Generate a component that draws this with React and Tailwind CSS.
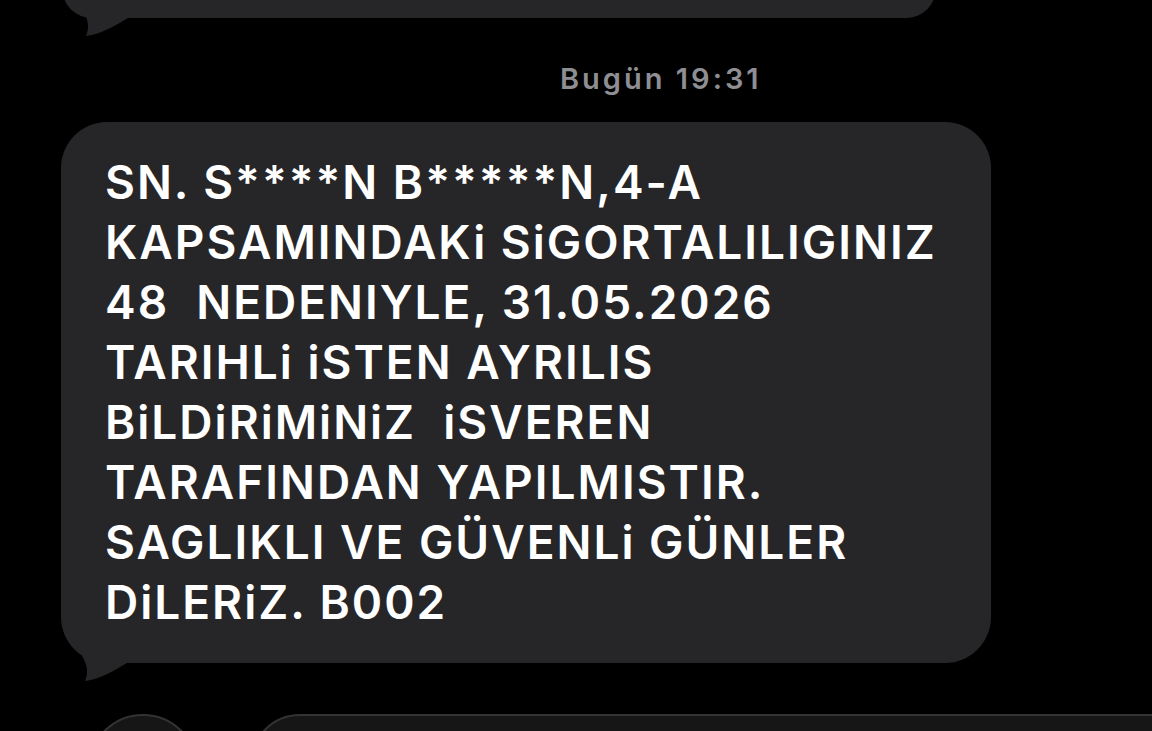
import React from "react";

const lines = [
  "SN. S****N B*****N,4-A",
  "KAPSAMINDAKi SiGORTALILIGINIZ",
  "48  NEDENIYLE, 31.05.2026",
  "TARIHLi iSTEN AYRILIS",
  "BiLDiRiMiNiZ  iSVEREN",
  "TARAFINDAN YAPILMISTIR.",
  "SAGLIKLI VE GÜVENLi GÜNLER",
  "DiLERiZ. B002",
];

const Tail = () => (
  <svg
    className="absolute left-0 bottom-[-20px]"
    width="70"
    height="82"
    viewBox="0 0 70 82"
  >
    <path d="M14 40 C22 58 30 66 24 80 C40 78 52 70 66 62 L66 40 Z" fill="#262628" />
  </svg>
);

export default function App() {
  return (
    <div
      className="w-[1152px] h-[731px] bg-black overflow-hidden flex flex-col"
      style={{ fontFamily: "Inter, 'Liberation Sans', sans-serif" }}
    >
      {/* previous bubble, cut off at the top */}
      <div className="relative mt-[-42px] ml-[62px] w-[874px] h-[60px] shrink-0">
        <div className="w-full h-full bg-[#262628] rounded-[45px]" />
        <Tail />
      </div>

      <div className="h-[104px] shrink-0 flex items-center pl-[560px] pt-[18px]">
        <span className="text-[29px] font-semibold text-[#8e8e93] tracking-[3px]">
          Bugün 19:31
        </span>
      </div>

      <div className="relative ml-[61px] w-[930px] shrink-0">
        <div className="bg-[#262628] rounded-[46px] pl-[44px] pr-[10px] pt-[30px] pb-[31px]">
          {lines.map((l, i) => (
            <div
              key={i}
              className="whitespace-pre text-white text-[46px] leading-[60px] font-semibold tracking-[2px]"
            >
              {l}
            </div>
          ))}
        </div>
        <Tail />
      </div>

      <div className="mt-[51px] flex items-start gap-[52px] shrink-0">
        <div className="ml-[88px] w-[110px] h-[110px] rounded-full bg-[#161616] border-2 border-[#333335] shrink-0" />
        <div className="flex-1 h-[110px] mr-[-60px] rounded-[50px] bg-[#161616] border-2 border-[#333335]" />
      </div>
    </div>
  );
}
